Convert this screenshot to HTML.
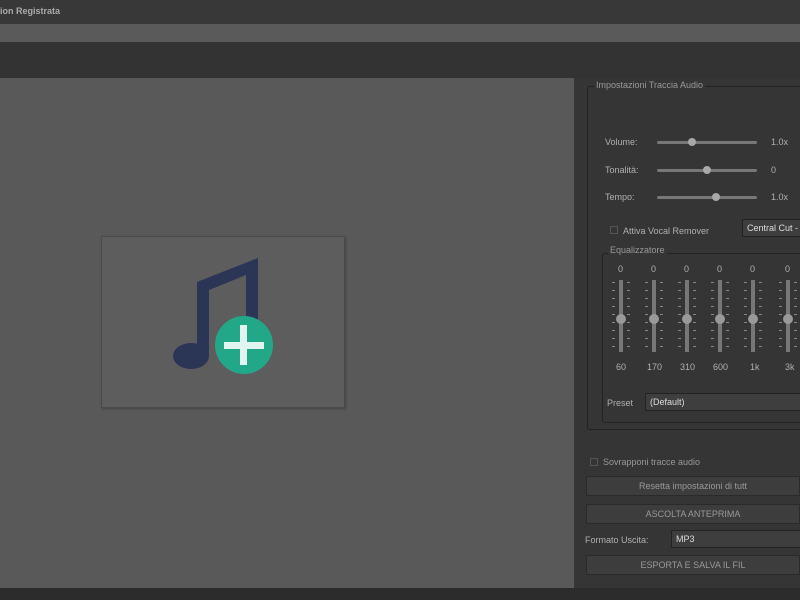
<!DOCTYPE html>
<html><head><style>
*{margin:0;padding:0;box-sizing:border-box}
body{width:800px;height:600px;overflow:hidden;background:#333;font-family:"Liberation Sans",sans-serif;font-size:9px;color:#b0b0b0;position:relative}
.a{position:absolute;white-space:nowrap}
.sl{position:absolute;height:3px;background:#777;border-radius:2px}
.kn{position:absolute;width:8px;height:8px;border-radius:50%;background:#a8a8a8;top:-3px}
.btn{position:absolute;left:586px;width:214px;height:20px;background:#3d3d3d;border:1px solid #2a2a2a;text-align:center;line-height:18px;color:#999;white-space:nowrap;overflow:hidden}
.eq{position:absolute;top:280px;width:4px;height:72px;background:#777}
.eqk{position:absolute;left:-3px;top:34px;width:10px;height:10px;border-radius:50%;background:#999}
.tk{position:absolute;top:282px;width:18px;height:70px;background:repeating-linear-gradient(#888 0 1px,transparent 1px 8px);-webkit-mask:linear-gradient(90deg,#000 0 3px,transparent 3px 15px,#000 15px)}
</style></head><body>
<div class="a" style="left:0;top:0;width:800px;height:24px;background:#383838"></div>
<div class="a" style="left:0;top:6px;font-size:9px;font-weight:bold;color:#aaa">ion Registrata</div>
<div class="a" style="left:0;top:24px;width:800px;height:18px;background:#5a5a5a"></div>
<div class="a" style="left:0;top:42px;width:800px;height:36px;background:#333"></div>
<div class="a" style="left:0;top:78px;width:574px;height:510px;background:#595959"></div>
<div class="a" style="left:574px;top:78px;width:226px;height:510px;background:#353535"></div>
<div class="a" style="left:0;top:588px;width:800px;height:12px;background:#2c2c2c"></div>
<div class="a" style="left:101px;top:236px;width:244px;height:172px;background:#5d5d5d;border:1px solid #4a4a4a;box-shadow:1px 1px 2px #444"></div>
<svg class="a" style="left:0;top:0" width="800" height="600">
<path d="M197 282 L258 258 L258 332 L246 332 L246 275 L209 290 L209 356 L197 356 Z" fill="#2b3656"/>
<ellipse cx="191" cy="356" rx="18" ry="13" fill="#2b3656"/>
<circle cx="244" cy="345" r="29" fill="#22a888"/>
<rect x="224" y="342" width="40" height="7" fill="#e0f5f0"/>
<rect x="240" y="325" width="7" height="40" fill="#e0f5f0"/>
</svg>
<div class="a" style="left:587px;top:86px;width:220px;height:344px;border:1px solid #222;border-radius:3px"></div>
<div class="a" style="left:594px;top:80px;background:#353535;padding:0 2px;color:#999">Impostazioni Traccia Audio</div>
<div class="a" style="left:605px;top:137px">Volume:</div>
<div class="sl" style="left:657px;top:141px;width:100px"><div class="kn" style="left:31px"></div></div>
<div class="a" style="left:771px;top:137px">1.0x</div>
<div class="a" style="left:605px;top:165px">Tonalità:</div>
<div class="sl" style="left:657px;top:169px;width:100px"><div class="kn" style="left:46px"></div></div>
<div class="a" style="left:771px;top:165px">0</div>
<div class="a" style="left:605px;top:192px">Tempo:</div>
<div class="sl" style="left:657px;top:196px;width:100px"><div class="kn" style="left:55px"></div></div>
<div class="a" style="left:771px;top:192px">1.0x</div>
<div class="a" style="left:610px;top:226px;width:8px;height:8px;border:1px solid #555"></div>
<div class="a" style="left:623px;top:226px">Attiva Vocal Remover</div>
<div class="a" style="left:742px;top:219px;width:60px;height:18px;background:#3e3e3e;border:1px solid #222;color:#ddd;padding:3px 4px;overflow:hidden">Central Cut -</div>
<div class="a" style="left:602px;top:253px;width:210px;height:170px;border:1px solid #222;border-radius:3px"></div>
<div class="a" style="left:608px;top:245px;background:#353535;padding:0 2px;color:#999">Equalizzatore</div>
<div class="a" style="left:618px;top:264px">0</div><div class="a" style="left:651px;top:264px">0</div><div class="a" style="left:684px;top:264px">0</div><div class="a" style="left:717px;top:264px">0</div><div class="a" style="left:750px;top:264px">0</div><div class="a" style="left:785px;top:264px">0</div>
<div class="tk" style="left:612px"></div><div class="eq" style="left:619px"><div class="eqk"></div></div>
<div class="tk" style="left:645px"></div><div class="eq" style="left:652px"><div class="eqk"></div></div>
<div class="tk" style="left:678px"></div><div class="eq" style="left:685px"><div class="eqk"></div></div>
<div class="tk" style="left:711px"></div><div class="eq" style="left:718px"><div class="eqk"></div></div>
<div class="tk" style="left:744px"></div><div class="eq" style="left:751px"><div class="eqk"></div></div>
<div class="tk" style="left:779px"></div><div class="eq" style="left:786px"><div class="eqk"></div></div>
<div class="a" style="left:616px;top:362px">60</div><div class="a" style="left:647px;top:362px">170</div><div class="a" style="left:680px;top:362px">310</div><div class="a" style="left:713px;top:362px">600</div><div class="a" style="left:750px;top:362px">1k</div><div class="a" style="left:785px;top:362px">3k</div>
<div class="a" style="left:607px;top:398px">Preset</div>
<div class="a" style="left:645px;top:393px;width:160px;height:18px;background:#3e3e3e;border:1px solid #222;color:#ddd;padding:3px 4px">(Default)</div>
<div class="a" style="left:590px;top:458px;width:8px;height:8px;border:1px solid #555"></div>
<div class="a" style="left:603px;top:457px;color:#999">Sovrapponi tracce audio</div>
<div class="btn" style="top:476px">Resetta impostazioni di tutt</div>
<div class="btn" style="top:504px">ASCOLTA ANTEPRIMA</div>
<div class="a" style="left:585px;top:535px">Formato Uscita:</div>
<div class="a" style="left:671px;top:530px;width:135px;height:18px;background:#3e3e3e;border:1px solid #222;color:#ddd;padding:3px 4px">MP3</div>
<div class="btn" style="top:555px">ESPORTA E SALVA IL FIL</div>
</body></html>
